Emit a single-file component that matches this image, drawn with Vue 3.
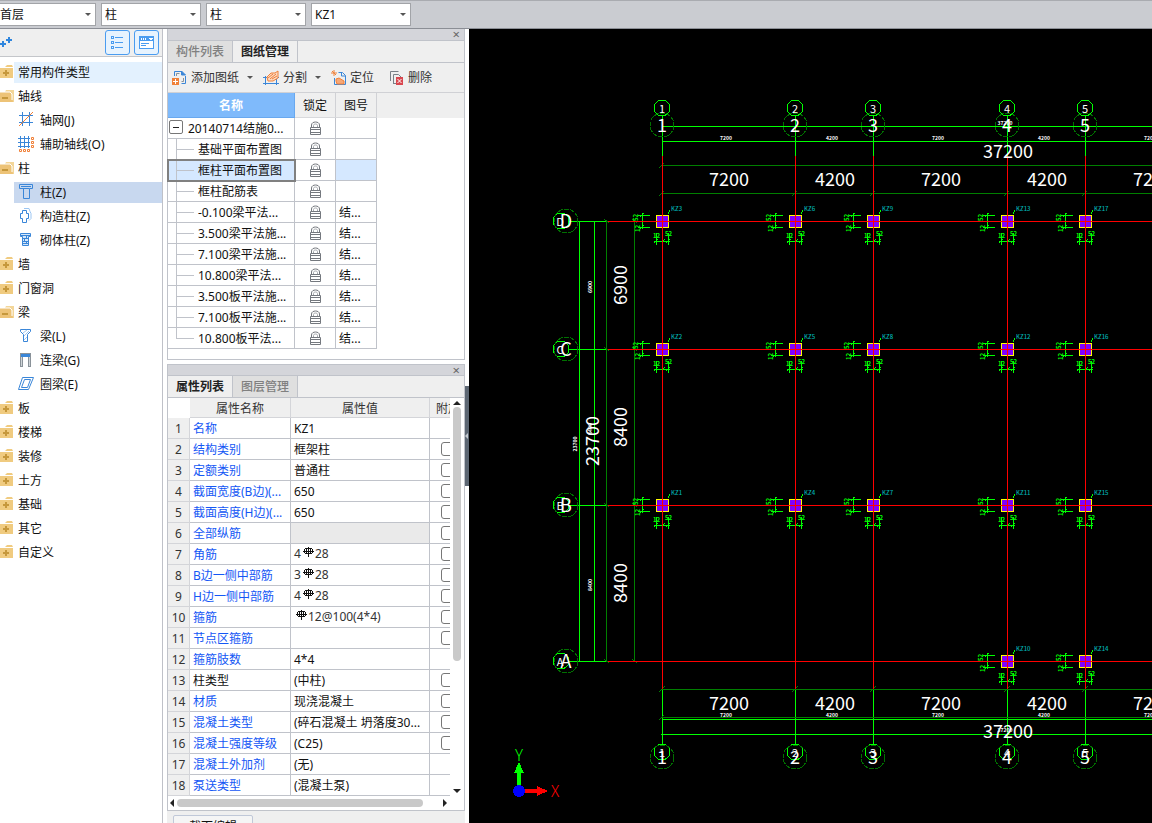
<script setup>
import { ref } from 'vue'

const combos = ref([
  { label: '楼层', value: '首层' },
  { label: '构件大类', value: '柱' },
  { label: '构件类型', value: '柱' },
  { label: '构件名称', value: 'KZ1' },
])

const tree = [
  { text: '常用构件类型', kind: 'closed', hot: true },
  { text: '轴线', kind: 'open' },
  { text: '轴网(J)', kind: 'grid' },
  { text: '辅助轴线(O)', kind: 'aux' },
  { text: '柱', kind: 'open' },
  { text: '柱(Z)', kind: 'column', selected: true },
  { text: '构造柱(Z)', kind: 'tie' },
  { text: '砌体柱(Z)', kind: 'brick' },
  { text: '墙', kind: 'closed' },
  { text: '门窗洞', kind: 'closed' },
  { text: '梁', kind: 'open' },
  { text: '梁(L)', kind: 'beam' },
  { text: '连梁(G)', kind: 'link' },
  { text: '圈梁(E)', kind: 'ring' },
  { text: '板', kind: 'closed' },
  { text: '楼梯', kind: 'closed' },
  { text: '装修', kind: 'closed' },
  { text: '土方', kind: 'closed' },
  { text: '基础', kind: 'closed' },
  { text: '其它', kind: 'closed' },
  { text: '自定义', kind: 'closed' },
]
const isFolder = (n) => n.kind === 'closed' || n.kind === 'open'

const drawings = [
  { name: '20140714结施0...', no: '', root: true },
  { name: '基础平面布置图', no: '' },
  { name: '框柱平面布置图', no: '', selected: true },
  { name: '框柱配筋表', no: '' },
  { name: '-0.100梁平法...', no: '结...' },
  { name: '3.500梁平法施...', no: '结...' },
  { name: '7.100梁平法施...', no: '结...' },
  { name: '10.800梁平法...', no: '结...' },
  { name: '3.500板平法施...', no: '结...' },
  { name: '7.100板平法施...', no: '结...' },
  { name: '10.800板平法...', no: '结...', last: true },
]

const props = [
  { name: '名称', value: 'KZ1' },
  { name: '结构类别', value: '框架柱', check: true },
  { name: '定额类别', value: '普通柱', check: true },
  { name: '截面宽度(B边)(...', value: '650', check: true },
  { name: '截面高度(H边)(...', value: '650', check: true },
  { name: '全部纵筋', value: '', check: true, disabled: true },
  { name: '角筋', pre: '4', post: '28', rebar: true, check: true },
  { name: 'B边一侧中部筋', pre: '3', post: '28', rebar: true, check: true },
  { name: 'H边一侧中部筋', pre: '4', post: '28', rebar: true, check: true },
  { name: '箍筋', pre: '', post: '12@100(4*4)', rebar: true, check: true },
  { name: '节点区箍筋', value: '', check: true },
  { name: '箍筋肢数', value: '4*4' },
  { name: '柱类型', value: '(中柱)', check: true, plain: true },
  { name: '材质', value: '现浇混凝土', check: true },
  { name: '混凝土类型', value: '(碎石混凝土 坍落度30...', check: true },
  { name: '混凝土强度等级', value: '(C25)', check: true },
  { name: '混凝土外加剂', value: '(无)' },
  { name: '泵送类型', value: '(混凝土泵)' },
]

const axesX = [
  { x: 662, n: '1' },
  { x: 795, n: '2' },
  { x: 873, n: '3' },
  { x: 1007, n: '4' },
  { x: 1085, n: '5' },
]
const axesY = [
  { y: 221, n: 'D' },
  { y: 349, n: 'C' },
  { y: 505, n: 'B' },
  { y: 661, n: 'A' },
]
const spansX = [
  { x: 729, t: '7200' },
  { x: 835, t: '4200' },
  { x: 941, t: '7200' },
  { x: 1047, t: '4200' },
  { x: 1153, t: '7200' },
]
const spansY = [
  { y: 285, t: '6900' },
  { y: 427, t: '8400' },
  { y: 583, t: '8400' },
]
const tagRows = [
  ['KZ3', 'KZ6', 'KZ9', 'KZ13', 'KZ17'],
  ['KZ2', 'KZ5', 'KZ8', 'KZ12', 'KZ16'],
  ['KZ1', 'KZ4', 'KZ7', 'KZ11', 'KZ15'],
  [null, null, null, 'KZ10', 'KZ14'],
]
const columns = tagRows.flatMap((row, r) =>
  row.map((tag, c) => ({ tag, x: axesX[c].x, y: axesY[r].y })).filter((c) => c.tag),
)
</script>

<template>
  <div class="app">
    <header class="topbar">
      <label v-for="(c, i) in combos" :key="i" class="combo">
        <select v-model="c.value" :aria-label="c.label">
          <option :value="c.value">{{ c.value }}</option>
        </select>
        <i class="caret"></i>
      </label>
    </header>

    <main class="work">
      <nav class="modules">
        <div class="modules-head">
          <svg class="pluses" width="13" height="14" viewBox="0 0 13 14" aria-hidden="true">
            <path d="M9 1v6M6 4h6M3 5v6M0 8h6" stroke="#2f86de" stroke-width="2" fill="none" />
          </svg>
          <button class="view" aria-label="列表视图">
            <svg width="15" height="15" viewBox="0 0 15 15" fill="none" stroke="#4a9cf0" shape-rendering="crispEdges">
              <path d="M1.500 1.500h2v2h-2zM1.500 6.500h2v2h-2zM1.500 11.500h2v2h-2zM5 2.500h8M5 7.500h8M5 12.500h8" />
            </svg>
          </button>
          <button class="view" aria-label="窗口视图">
            <svg width="17" height="15" viewBox="0 0 17 15" shape-rendering="crispEdges">
              <path d="M1.500 1.500h14v12h-14z" fill="#fff" stroke="#4a9cf0" />
              <path d="M1 1h15v5H1z" fill="#4a9cf0" />
              <path d="M3 3h1v2H3zM5 3h1v2H5zM7 3h1v2H7zM11 3h4v1h-1v1h-2v-1h-1z" fill="#fff" />
              <path d="M3 8.500h8M3 10.500h5" stroke="#4a9cf0" />
            </svg>
          </button>
        </div>
        <ul class="tree">
          <li v-for="(n, i) in tree" :key="i">
            <svg v-if="n.kind === 'closed'" class="folder" width="14" height="16" viewBox="0 0 14 16">
              <path d="M7 1h5l1 2H5z" fill="#f0cb80" />
              <path d="M0 4h13v10H0z" fill="#f0cb80" />
              <path d="M3 9h6M6 6v6" stroke="#c6983c" stroke-width="2" />
            </svg>
            <svg v-else-if="n.kind === 'open'" class="folder" width="14" height="16" viewBox="0 0 14 16">
              <path d="M6 2h8v12h-3V4H5z" fill="#f3d699" />
              <path d="M0 4h11l2 10H0z" fill="#edc377" />
              <path d="M0 4h10l2 2v6" stroke="#fff" fill="none" />
              <path d="M2 10h6" stroke="#c6983c" stroke-width="2" />
            </svg>
            <button :class="['item', { child: !isFolder(n), hot: n.hot, selected: n.selected }]">
              <svg v-if="!isFolder(n)" width="16" height="16" viewBox="0 0 16 16" fill="none" stroke="#3a86d8">
                <template v-if="n.kind === 'grid'">
                  <path d="M4.500 0v14M11.500 0v14M1 3.500h14M1 10.500h14" />
                  <path d="M1 14L15 0" stroke="#f08038" />
                </template>
                <template v-else-if="n.kind === 'aux'">
                  <path d="M2.500 0v12M6.500 0v12M10.500 0v12M0 2.500h12M0 6.500h12M0 10.500h12" />
                  <path d="M13.500 1.500h2v2h-2zM13.500 5.500h2v2h-2zM13.500 9.500h2v2h-2zM1.500 13.500h2v2h-2zM5.500 13.500h2v2h-2zM9.500 13.500h2v2h-2z" stroke="#f08038" />
                </template>
                <template v-else-if="n.kind === 'column'">
                  <path d="M1.500 .500h13v4h-3v10h-6v-10h-4z" />
                  <path d="M3 2.500h10M5 4.500h6" />
                </template>
                <template v-else-if="n.kind === 'tie'">
                  <path d="M4.500 2.500h4v3h2v5h-2v4h-4v-4h-2v-5h2z" />
                  <path d="M6 .500h5l1 3 1 2v5l-2 2" stroke="#9cc6f2" />
                </template>
                <template v-else-if="n.kind === 'brick'">
                  <path d="M2.500 1.500h10v3h-2v9h-6v-9h-2z" fill="#d6e8fa" />
                  <path d="M3 3.500h9M5 6.500h5M5 9.500h5M5 11.500h5M8.500 4v2M6.500 7v2M8.500 10v2" />
                </template>
                <template v-else-if="n.kind === 'beam'">
                  <path d="M2.500 1.500h10v2l-3 3v7h-4v-7l-3-3z" />
                  <path d="M5 5l4-3M6 8l5-5M6 12l3-3" stroke="#9cc6f2" />
                </template>
                <template v-else-if="n.kind === 'link'">
                  <path d="M3.500 1v14M11.500 1v14" stroke="#8a9299" stroke-width="3" />
                  <path d="M3.500 5v9M11.500 5v9" stroke="#cfd4d8" />
                  <path d="M2 1.500h11" stroke="#8a9299" />
                  <path d="M3 3.500h9" stroke-width="3" />
                </template>
                <template v-else>
                  <path d="M4.500 1.500h11l-5 12h-10z" />
                  <path d="M6.500 3.500h6l-3 8h-6z" />
                </template>
              </svg>
              <span>{{ n.text }}</span>
            </button>
          </li>
        </ul>
      </nav>

      <div class="docks">
        <section class="panel">
          <div class="strip"><button aria-label="关闭">×</button></div>
          <div class="tabs">
            <button>构件列表</button>
            <button class="on">图纸管理</button>
          </div>
          <div class="tools">
            <button>
              <svg width="16" height="16" viewBox="0 0 16 16" fill="none" stroke="#3a86d8">
                <path d="M2.500 6V1.500h7M13.500 6v7.500h-4" stroke-width="1" /><path d="M9.500 1v4h4z" fill="#3a86d8" />
                <path d="M4.500 6V3.500h3M11.500 8v3.500h-2" stroke="#8a9299" />
                <path d="M0 8h7v7H0z" fill="#f08038" stroke="none" /><path d="M1 11.500h5M3.500 9v5" stroke="#fff" />
              </svg>
              <span>添加图纸</span><i class="caret"></i>
            </button>
            <button>
              <svg width="17" height="16" viewBox="0 0 17 16" fill="none" stroke="#3a86d8">
                <path d="M2.500 6v9M13.500 6v9M0 13.500h16M0 7.500h4M13 7.500h3" />
                <path d="M4 7l4-4h4l3-2v7l-5 3H5z" stroke="#f08038" fill="#fbd9c2" />
                <path d="M5 8l5-4M7 9l6-5M9 9l5-3" stroke="#f08038" />
              </svg>
              <span>分割</span><i class="caret"></i>
            </button>
            <button>
              <svg width="16" height="16" viewBox="0 0 16 16" fill="none" stroke="#3a86d8">
                <path d="M3.500 8v6.500h11v-9l-3-3h-4M10.500 3v3h4" />
                <path d="M3 0v6M0 3h6M1 1l4 4" stroke="#f08038" />
                <path d="M5 9l3-1 5 3v3H6l-1-3z" fill="#f6a878" stroke="#f08038" />
              </svg>
              <span>定位</span>
            </button>
            <button>
              <svg width="16" height="16" viewBox="0 0 16 16" fill="none" stroke="#7a8087">
                <path d="M1.500 11V1.500h8M4.500 13.500v-9h5l3 3M4 13.500h4" />
                <path d="M7 7h7v8H7z" fill="#d9474f" stroke="none" /><path d="M8.500 9l4 4M12.500 9l-4 4" stroke="#fff" />
              </svg>
              <span>删除</span>
            </button>
          </div>
          <table class="docs">
            <thead>
              <tr><th class="w-name">名称</th><th class="w-s">锁定</th><th class="w-s">图号</th><td class="rest"></td></tr>
            </thead>
            <tbody>
              <tr v-for="(d, i) in drawings" :key="i" :class="{ selected: d.selected }">
                <td class="c-name">
                  <div class="node">
                    <button v-if="d.root" class="fold" aria-label="折叠"></button>
                    <span v-else :class="['branch', { last: d.last }]"></span>
                    <span class="title">{{ d.name }}</span>
                  </div>
                </td>
                <td class="c-lock">
                  <svg width="13" height="14" viewBox="0 0 13 14" fill="none" stroke="#74787e">
                    <path d="M2.500 7V4c0-4 8-4 8 0v3" /><path d="M4.500 7V4.500c0-2 4-2 4 0V7" stroke="#a4a8ad" />
                    <path d="M1.500 6.500h10v7h-10zM1 8.500h11M1 11.500h11" />
                  </svg>
                </td>
                <td class="c-no">{{ d.no }}</td>
                <td class="rest"></td>
              </tr>
            </tbody>
          </table>
        </section>

        <section class="panel props">
          <div class="strip"><button aria-label="关闭">×</button></div>
          <div class="tabs">
            <button class="on">属性列表</button>
            <button>图层管理</button>
          </div>
          <div class="sheet">
            <div class="clip">
              <table class="attrs">
                <thead>
                  <tr><td class="a-no"></td><th class="a-name">属性名称</th><th class="a-val">属性值</th><th class="a-chk">附加</th></tr>
                </thead>
                <tbody>
                  <tr v-for="(p, i) in props" :key="i">
                    <th scope="row">{{ i + 1 }}</th>
                    <td :class="p.plain ? '' : 'blue'">{{ p.name }}</td>
                    <td :class="{ off: p.disabled, raised: p.rebar }">
                      <template v-if="p.rebar">{{ p.pre }}<svg class="rebar" width="12" height="11" viewBox="0 0 12 11" fill="none" stroke="#111" shape-rendering="crispEdges"><path d="M5.500 0v10M3.500 1v6M7.500 1v6M2 1.500h7M2 6.500h7M1.500 2v4M9.500 2v4M0 4.500h11" /></svg>{{ p.post }}</template>
                      <template v-else>{{ p.value }}</template>
                    </td>
                    <td class="k"><input v-if="p.check" type="checkbox" :aria-label="p.name + ' 附加'" /></td>
                  </tr>
                </tbody>
              </table>
            </div>
            <div class="vbar"><i class="up"></i><i class="thumb"></i><i class="space"></i><i class="down"></i></div>
          </div>
          <div class="hbar"><i class="left"></i><i class="thumb"></i><i class="right"></i></div>
        </section>
        <div class="foot"><button>截面编辑</button></div>
      </div>

      <div class="splitter"><button aria-label="收起面板"></button></div>

      <section class="canvas">
        <svg width="100%" height="100%" aria-label="框柱平面布置图">
          <g transform="translate(-469 -29)" fill="none">
            <g class="bright">
              <path d="M662 126H1400M662 141H1400M662 719H1400M661 734H1400M579 221V661M594 221V661" />
              <path v-for="a in axesX" :key="'g' + a.x" :d="`M${a.x} 116V156M${a.x} 690V745`" />
              <path v-for="a in axesY" :key="'h' + a.y" :d="`M568 ${a.y}H608`" />
            </g>
            <g class="dark">
              <path d="M662 165H1400M662 193H1400M662 689H1400M662 717H1400M606 221V661M634 221V661" />
              <path v-for="a in axesX" :key="'t' + a.x" :d="`M${a.x - 3} 196l5-5M${a.x - 3} 692l6-6`" />
              <path v-for="a in axesY" :key="'u' + a.y" :d="`M604 ${a.y - 2}l5 4M632 ${a.y - 2}l5 4`" />
              <path d="M659 168l5-5M659 720l5-5" />
            </g>
            <g v-for="(c, i) in columns" :key="'c' + i" :transform="`translate(${c.x} ${c.y})`">
              <rect class="pillar" x="-6" y="-6" width="12" height="12" />
              <path class="bright" d="M-24-6H-12M-24 6H-12M-20-8V8M-22-4l4-4M-22 8l4-4" />
              <path class="bright" d="M-6 12V24M6 12V24M-8 20H8M-8 22l4-4M0 22l3-4M4 22l4-4M6-7L8-11" />
              <g class="minor">
                <text transform="translate(-24 0) rotate(-90)">52</text>
                <text transform="translate(-22 11) rotate(-90)">12</text>
                <text x="-9" y="17">12</text>
                <text x="3" y="15">52</text>
              </g>
              <text class="tag" x="9" y="-10">{{ c.tag }}</text>
            </g>
            <g class="red">
              <path v-for="a in axesX" :key="'r' + a.x" :d="`M${a.x} 156V689`" />
              <path v-for="a in axesY" :key="'s' + a.y" :d="`M608 ${a.y}H1400`" />
            </g>
            <g v-for="a in axesX" :key="'b' + a.x">
              <circle class="bright" :cx="a.x" cy="108" r="8" />
              <circle class="ring" :cx="a.x" cy="125" r="12" />
              <circle class="bright" :cx="a.x" cy="752" r="8" />
              <circle class="ring" :cx="a.x" cy="757" r="12" />
              <text class="small" :x="a.x" y="113">{{ a.n }}</text>
              <text class="big" :x="a.x" y="132">{{ a.n }}</text>
              <text class="small" :x="a.x" y="757">{{ a.n }}</text>
              <text class="big" :x="a.x" y="764">{{ a.n }}</text>
            </g>
            <g v-for="a in axesY" :key="'l' + a.y">
              <circle class="bright" cx="561" :cy="a.y" r="8" />
              <circle class="ring" cx="566" :cy="a.y" r="12" />
              <text class="small" x="560" :y="a.y + 5">{{ a.n }}</text>
              <text class="big" x="566" :y="a.y + 7">{{ a.n }}</text>
            </g>
            <g class="dim">
              <template v-for="s in spansX" :key="'x' + s.x">
                <text :x="s.x" y="186">{{ s.t }}</text>
                <text :x="s.x" y="710">{{ s.t }}</text>
              </template>
              <text x="1008" y="158">37200</text>
              <text x="1008" y="738">37200</text>
              <text v-for="s in spansY" :key="'y' + s.y" :transform="`translate(627 ${s.y}) rotate(-90)`">{{ s.t }}</text>
              <text transform="translate(599 441) rotate(-90)">23700</text>
            </g>
            <g class="tiny">
              <template v-for="s in spansX" :key="'m' + s.x">
                <text :x="s.x - 3" y="140">{{ s.t }}</text>
                <text :x="s.x - 3" y="717">{{ s.t }}</text>
              </template>
              <text x="1005" y="125">37200</text>
              <text x="1005" y="732">37200</text>
              <text v-for="s in spansY" :key="'n' + s.y" :transform="`translate(592 ${s.y + 2}) rotate(-90)`">{{ s.t }}</text>
              <text transform="translate(577 444) rotate(-90)">23700</text>
            </g>
            <g>
              <path d="M517 786V773h-3l5-11 5 11h-3v13z" fill="#0f0" />
              <path d="M524 789h13v-3l11 5-11 5v-3h-13z" fill="#f00" />
              <circle cx="519" cy="791" r="6" fill="#00f" />
              <text class="axis" x="519" y="761" fill="#0f0">Y</text>
              <text class="axis" x="555" y="797" fill="#f00">X</text>
            </g>
          </g>
        </svg>
      </section>
    </main>
  </div>
</template>

<style>
html,
body {
  overflow: hidden;
}
</style>

<style scoped>
* {
  box-sizing: border-box;
}
.app {
  display: flex;
  flex-direction: column;
  height: 100vh;
  font: 12px/20px "Noto Sans", "Noto Sans CJK SC", sans-serif;
  color: #111;
  background: #fff;
  overflow: hidden;
}
button,
select,
input {
  font: inherit;
  color: inherit;
  margin: 0;
  padding: 0;
  border: 0;
  background: none;
}
svg {
  flex: none;
  display: block;
}
.topbar {
  flex: none;
  display: flex;
  gap: 5px;
  height: 29px;
  padding: 2px 0;
  margin-left: -4px;
  background: #caccd1;
  border-top: 1px solid #a9abb0;
  border-bottom: 1px solid #8b8e95;
}
.combo {
  display: flex;
  align-items: center;
  width: 100px;
  height: 23px;
  background: #fff;
  border: 1px solid #a2a4a8;
  padding-right: 4px;
}
.combo select {
  flex: 1;
  min-width: 0;
  appearance: none;
  padding-left: 3px;
  outline: 0;
}
.caret {
  border: 3px solid transparent;
  border-top-color: #555;
  border-bottom: 0;
}
.work {
  flex: 1;
  min-height: 0;
  display: flex;
}
.modules {
  flex: none;
  width: 163px;
  border-right: 1px solid #bfc1c8;
}
.modules-head {
  display: flex;
  gap: 4px;
  height: 28px;
  padding: 1px 3px 0 0;
  background: #efefef;
  border-bottom: 1px solid #c4c6ca;
}
.pluses {
  margin: 6px auto 0 0;
}
.view {
  display: flex;
  align-items: center;
  justify-content: center;
  width: 25px;
  height: 25px;
  border: 1px solid #4a9cf0;
  border-radius: 3px;
  background: #e7f3fe;
}
.tree {
  list-style: none;
  margin: 0;
  padding: 5px 0 0;
}
.tree li {
  display: flex;
  align-items: center;
  height: 21px;
  margin-bottom: 3px;
}
.item {
  flex: 1;
  display: flex;
  align-items: center;
  gap: 6px;
  height: 21px;
  padding-left: 4px;
  text-align: left;
}
.item.child {
  margin-left: 14px;
}
.item.child svg {
  margin-top: -1px;
}
.folder {
  margin-top: -1px;
}
.item.hot {
  background: #e3f1fe;
}
.item.selected {
  background: #c8d8ef;
}
.docks {
  flex: none;
  width: 302px;
  padding-left: 4px;
  display: flex;
  flex-direction: column;
}
.panel {
  flex: none;
  border: 1px solid #c0c3ca;
  border-top: 0;
  padding-bottom: 10px;
  margin-bottom: 4px;
}
.panel.props {
  margin: 0;
  padding: 0;
}
.strip {
  display: flex;
  justify-content: flex-end;
  height: 12px;
  padding-right: 4px;
  background: #d4d5da;
  border-bottom: 1px solid #c0c3ca;
}
.panel.props .strip {
  border-top: 1px solid #c0c3ca;
}
.strip button {
  font-size: 13px;
  line-height: 11px;
  color: #666;
}
.tabs {
  display: flex;
  height: 22px;
  background: #efefef;
  border-bottom: 1px solid #c0c3ca;
}
.tabs button {
  width: 65px;
  background: #dfdfdf;
  border-right: 1px solid #c0c3ca;
  color: #808080;
  font-weight: 500;
}
.tabs .on {
  background: #efefef;
  color: #222;
  font-weight: 700;
}
.tools {
  display: flex;
  gap: 9px;
  height: 30px;
  padding-left: 4px;
  background: #efefef;
  border-bottom: 1px solid #d0d1d5;
}
.tools button {
  display: flex;
  align-items: center;
  gap: 3px;
  color: #333;
}
.tools .caret {
  margin: 0 1px 0 5px;
}
.tools button:last-child {
  margin-left: 6px;
}
table {
  table-layout: fixed;
  border-spacing: 0;
}
th,
td {
  padding: 0;
  height: 21px;
  line-height: 20px;
  white-space: nowrap;
  overflow: hidden;
}
.docs {
  width: 100%;
}
.docs thead {
  background: #efefef;
}
.docs thead th {
  height: 25px;
  padding-top: 2px;
  line-height: 22px;
  font-weight: 400;
  border-right: 1px solid #d0d1d5;
  border-bottom: 1px solid #d8d9dc;
}
.docs thead .w-name {
  width: 127px;
  color: #fff;
  font-weight: 700;
  background: #7fbafb;
  border-color: #68a8ef;
}
.w-s {
  width: 41px;
}
.docs tbody td:not(.rest) {
  border-right: 1px solid #c0c3ca;
  border-bottom: 1px solid #c0c3ca;
}
.node {
  display: flex;
  height: 20px;
}
.title {
  line-height: 22px;
}
.fold {
  width: 14px;
  height: 14px;
  margin: 2px 5px 0 1px;
  border: 1px solid #777;
  border-radius: 2px;
  background: linear-gradient(#222, #222) center / 6px 1px no-repeat;
}
.branch {
  width: 18px;
  height: 20px;
  margin: 0 4px 0 8px;
  border-left: 1px solid #c0c3ca;
  background: linear-gradient(#c0c3ca, #c0c3ca) 0 10px / 18px 1px no-repeat;
}
.branch.last {
  height: 11px;
}
.c-lock svg {
  margin: 0 auto;
}
.docs tbody .c-no {
  padding: 2px 0 0 3px;
  line-height: 18px;
}
.selected .c-name,
.selected .c-no {
  background: #d5e8ff;
}
.selected .c-name {
  outline: 2px solid #808080;
  outline-offset: -1px;
}
.sheet {
  display: flex;
}
.clip {
  flex: 1;
  min-width: 0;
  overflow: hidden;
}
.attrs {
  width: 322px;
}
.attrs thead th,
.attrs thead td {
  height: 20px;
  padding-top: 2px;
  line-height: 17px;
}
.attrs th {
  font-weight: 400;
  color: #333;
  background: #efefef;
  border-right: 1px solid #d4d5d9;
  border-bottom: 1px solid #d4d5d9;
}
.attrs tbody th {
  padding-top: 2px;
  line-height: 18px;
}
.attrs tbody td {
  padding: 2px 0 0 3px;
  line-height: 18px;
  border-right: 1px solid #c0c3ca;
  border-bottom: 1px solid #c0c3ca;
}
.a-no {
  width: 22px;
}
.a-name {
  width: 101px;
}
.a-val {
  width: 139px;
}
.attrs thead .a-chk {
  width: 60px;
  padding-left: 6px;
  text-align: left;
}
.attrs .blue {
  color: #1457f5;
}
.attrs .off {
  background: #eaeaea;
}
.attrs tbody .raised {
  padding-top: 1px;
  color: #333;
  vertical-align: top;
}
.rebar {
  display: inline-block;
  margin: 0 0 0 2px;
}
.attrs tbody .k {
  padding: 0 0 0 11px;
}
.k input {
  display: block;
  appearance: none;
  width: 14px;
  height: 14px;
  border: 1px solid #777;
  border-radius: 3px;
}
.vbar {
  flex: none;
  width: 14px;
  display: flex;
  flex-direction: column;
  align-items: center;
  padding: 3px 0;
}
.vbar .thumb {
  flex: 253;
  width: 8px;
  margin-top: 2px;
  border-radius: 4px;
  background: #c9c9c9;
}
.vbar .space {
  flex: 128;
}
.up,
.down {
  border: 4px solid transparent;
}
.up {
  border-bottom-color: #222;
  border-top: 0;
}
.down {
  border-top-color: #222;
  border-bottom: 0;
}
.hbar {
  display: flex;
  align-items: center;
  height: 14px;
  padding: 0 17px 0 2px;
}
.hbar .thumb {
  flex: 1;
  height: 8px;
  margin: 0 20px 0 3px;
  border-radius: 4px;
  background: #c9c9c9;
}
.left,
.right {
  border: 4px solid transparent;
}
.left {
  border-right-color: #222;
  border-left: 0;
}
.right {
  border-left-color: #222;
  border-right: 0;
}
.foot {
  flex: 1;
  min-height: 0;
  padding: 4px 0 0 6px;
  background: #efefef;
  overflow: hidden;
}
.foot button {
  width: 80px;
  height: 24px;
  border: 1px solid #c0c8d8;
  border-radius: 2px;
  background: #f5f5f5;
}
.splitter {
  flex: none;
  width: 4px;
  display: flex;
  align-items: center;
}
.splitter button {
  width: 4px;
  height: 100px;
  margin-bottom: -20px;
  display: flex;
  align-items: center;
  background: #5d6773;
}
.splitter button::after {
  content: "";
  border: 3px solid transparent;
  border-right-color: #c4cad0;
  border-left: 0;
}
.canvas {
  flex: 1;
  min-width: 0;
  background: #000;
  overflow: hidden;
}
.canvas svg {
  shape-rendering: crispEdges;
  font-family: "Noto Sans CJK SC", sans-serif;
}
.bright {
  stroke: #0f0;
}
.dark {
  stroke: #007f00;
}
.ring {
  stroke: #007000;
  stroke-dasharray: 5 1;
}
.red {
  stroke: #f00;
}
.pillar {
  fill: #8000ff;
  stroke: #ff0;
}
.dim,
.big,
.small,
.tiny {
  fill: #fff;
  text-anchor: middle;
}
.dim,
.big {
  font-size: 18px;
}
.small {
  font-size: 11px;
}
.tiny {
  font-size: 5px;
  font-weight: 700;
}
.minor {
  font-size: 6px;
  font-weight: 700;
  fill: #0f0;
}
.tag {
  font-size: 6px;
  font-weight: 500;
  fill: #00b0b0;
}
.axis {
  font-size: 16px;
  font-weight: 300;
  text-anchor: middle;
}
</style>
